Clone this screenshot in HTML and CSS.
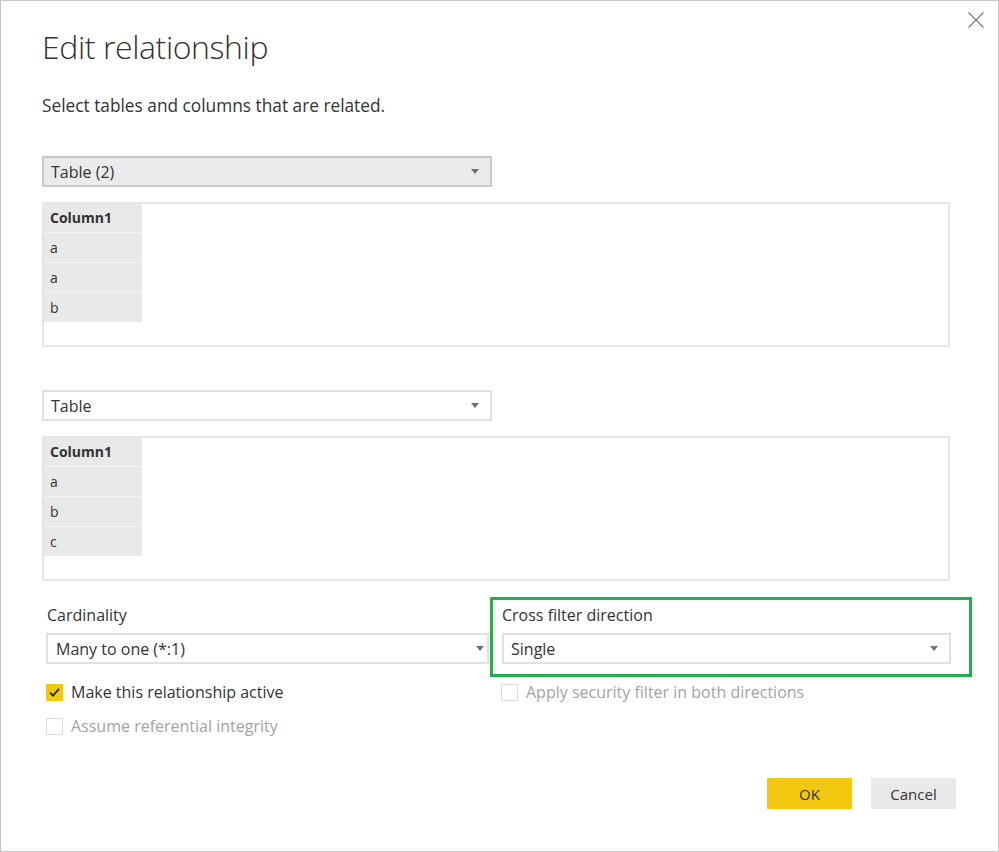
FILE: index.html
```html
<!DOCTYPE html>
<html lang="en">
<head>
<meta charset="utf-8">
<title>Edit relationship</title>
<link rel="stylesheet" href="styles.css">
</head>
<body>
<div class="dialog">
  <button class="close" aria-label="Close">
    <svg width="16" height="16" viewBox="0 0 16 16"><path d="M0.5 0.5L15.5 15.5M15.5 0.5L0.5 15.5" stroke="#7a7a7a" stroke-width="1.2" fill="none"/></svg>
  </button>
  <h1 class="title">Edit relationship</h1>
  <p class="subtitle">Select tables and columns that are related.</p>

  <div class="select select-table select-active"><span class="select-text">Table (2)</span><span class="arrow"></span></div>
  <div class="grid">
    <div class="column">
      <div class="cell head">Column1</div>
      <div class="cell">a</div>
      <div class="cell">a</div>
      <div class="cell last">b</div>
    </div>
  </div>

  <div class="select select-table select-second"><span class="select-text">Table</span><span class="arrow"></span></div>
  <div class="grid">
    <div class="column">
      <div class="cell head">Column1</div>
      <div class="cell">a</div>
      <div class="cell">b</div>
      <div class="cell last">c</div>
    </div>
  </div>

  <div class="settings">
    <div class="field field-left">
      <div class="label">Cardinality</div>
      <div class="select select-card"><span class="select-text">Many to one (*:1)</span><span class="arrow"></span></div>
    </div>
    <div class="highlight">
      <div class="label">Cross filter direction</div>
      <div class="select select-cross"><span class="select-text">Single</span><span class="arrow"></span></div>
    </div>
    <div class="checks checks-left">
      <div class="check">
        <span class="box box-checked"><svg width="17" height="17" viewBox="0 0 17 17"><path d="M4 8.6L7 11.6L13 4.8" stroke="#2b2b2b" stroke-width="1.8" fill="none"/></svg></span>
        <span class="check-label">Make this relationship active</span>
      </div>
      <div class="check check-disabled">
        <span class="box"></span>
        <span class="check-label">Assume referential integrity</span>
      </div>
    </div>
    <div class="checks checks-right">
      <div class="check check-disabled">
        <span class="box"></span>
        <span class="check-label">Apply security filter in both directions</span>
      </div>
    </div>
  </div>

  <div class="buttons">
    <button class="btn btn-primary">OK</button>
    <button class="btn">Cancel</button>
  </div>
</div>
</body>
</html>
```

FILE: styles.css
```css
html, body {
  margin: 0;
  padding: 0;
  background: #ffffff;
}

body {
  font-family: "Open Sans", "Noto Sans", "Liberation Sans", sans-serif;
  color: #333333;
}

.dialog {
  position: relative;
  box-sizing: border-box;
  width: 999px;
  height: 852px;
  border: 1px solid #c6c6c6;
  padding: 24px 41px 0 41px;
  display: flex;
  flex-direction: column;
  align-items: flex-start;
}

.close {
  position: absolute;
  top: 11px;
  right: 14px;
  width: 16px;
  height: 16px;
  padding: 0;
  border: 0;
  background: transparent;
  display: block;
}
.close svg { display: block; }

.title {
  margin: 0;
  font-weight: 300;
  font-size: 32px;
  letter-spacing: -0.4px;
  line-height: 44px;
  color: #333333;
}

.subtitle {
  margin: 26px 0 0 0;
  font-size: 17.3px;
  line-height: 22px;
  color: #333333;
}

.select {
  box-sizing: border-box;
  height: 31px;
  border: 2px solid #e1e1e1;
  background: #ffffff;
  display: flex;
  align-items: center;
  justify-content: space-between;
  padding: 0 11px 0 7px;
  font-size: 16px;
  color: #333333;
}

.select-table {
  width: 450px;
}
.select-active {
  margin-top: 39px;
  background: #ebebeb;
  border-color: #c9c9c9;
}
.select-second {
  margin-top: 43px;
}

.arrow {
  width: 0;
  height: 0;
  border-left: 4.5px solid transparent;
  border-right: 4.5px solid transparent;
  border-top: 5px solid #707070;
}

.grid {
  box-sizing: border-box;
  width: 908px;
  height: 145px;
  margin-top: 15px;
  border: 2px solid #e6e6e6;
  padding: 0;
}

.column {
  width: 98px;
  background: #e9e9e9;
}

.cell {
  box-sizing: border-box;
  height: 30px;
  padding: 0 6px;
  font-size: 14px;
  line-height: 29px;
  border-bottom: 1px solid #f4f4f4;
  color: #333333;
}
.cell.head {
  font-weight: 700;
  height: 29px;
  line-height: 28px;
}
.cell.last {
  border-bottom: 0;
  height: 29px;
}

.settings {
  margin-top: 16px;
  width: 931px;
  padding-left: 3px;
  display: grid;
  grid-template-columns: 445px 482px;
  align-items: start;
}

.label {
  font-size: 16px;
  line-height: 22px;
  color: #333333;
}

.field-left {
  padding-top: 7px;
}
.field-left .label {
  padding-left: 2px;
}
.field-left .select {
  margin-top: 7px;
  margin-left: 1px;
  width: 443px;
  padding-right: 3px;
  padding-left: 8px;
}

.highlight {
  box-sizing: border-box;
  border: 3px solid #21b04b;
  padding: 4px 18px 10px 9px;
}
.highlight .select {
  margin-top: 7px;
  padding-left: 7px;
}

.checks {
  margin-top: 4px;
  display: flex;
  flex-direction: column;
  gap: 12px;
}
.checks-left { padding-left: 1px; }
.checks-right { padding-left: 11px; }

.check {
  display: flex;
  align-items: center;
  gap: 8px;
  height: 22px;
  font-size: 16px;
  line-height: 22px;
  color: #333333;
}
.check-disabled { color: #a3a3a3; }

.box {
  box-sizing: border-box;
  width: 17px;
  height: 17px;
  border: 1px solid #dcdcdc;
  background: #ffffff;
  display: block;
  flex: none;
}
.box svg { display: block; margin: -1px; }
.box-checked {
  background: #f2c811;
  border-color: #f2c811;
}

.buttons {
  margin-top: 41px;
  align-self: flex-end;
  display: flex;
  gap: 19px;
  margin-right: 1px;
}

.btn {
  box-sizing: border-box;
  width: 85px;
  height: 31px;
  border: 0;
  background: #e9e9e9;
  font-family: "Open Sans", "Noto Sans", "Liberation Sans", sans-serif;
  font-size: 15px;
  color: #333333;
  padding: 0;
}
.btn-primary {
  background: #f2c811;
}
```
